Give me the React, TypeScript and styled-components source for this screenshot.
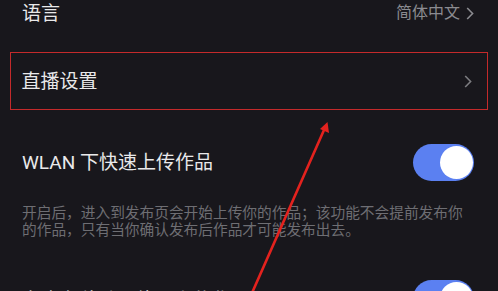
import React from "react";
import styled, { createGlobalStyle } from "styled-components";

const GlobalStyle = createGlobalStyle`
  html, body {
    margin: 0;
    padding: 0;
    background: #18171c;
    overflow: hidden;
  }
  body {
    font-family: Roboto, "Noto Sans CJK SC", sans-serif;
  }
`;

const Page = styled.div`
  position: relative;
  width: 498px;
  height: 291px;
  overflow: hidden;
  background: #18171c;
  display: flex;
  flex-direction: column;
`;

const Row = styled.div<{ $height: number; $top?: number }>`
  display: flex;
  align-items: center;
  justify-content: space-between;
  flex-shrink: 0;
  height: ${({ $height }) => $height}px;
  margin-top: ${({ $top }) => $top || 0}px;
  padding: 0 24px 0 22px;
`;

const Highlight = styled.div`
  display: flex;
  align-items: center;
  justify-content: space-between;
  flex-shrink: 0;
  height: 56px;
  margin: 26px 10px 0;
  padding: 0 15px 0 10.5px;
  border: 1.5px solid #c42a2b;
`;

const Label = styled.span<{ $drop?: number }>`
  font-size: 19px;
  color: #e9e9ea;
  line-height: 1;
  white-space: nowrap;
  padding-top: ${({ $drop }) => $drop || 0}px;
`;

const Value = styled.span`
  display: flex;
  align-items: center;
  gap: 6px;
  font-size: 16px;
  color: #8b8b90;
  line-height: 1;
`;

const Note = styled.p`
  margin: 24px 0 0;
  padding: 0 10px 0 22px;
  font-size: 14.7px;
  line-height: 17px;
  color: #6e6e73;
  white-space: nowrap;
  flex-shrink: 0;
`;

const Track = styled.div<{ $on?: boolean }>`
  width: 61px;
  height: 37px;
  border-radius: 19px;
  background: ${({ $on }) => ($on ? "#5b80f1" : "#3a3a40")};
  display: flex;
  align-items: center;
  justify-content: ${({ $on }) => ($on ? "flex-end" : "flex-start")};
  padding: 0 1px;
  box-sizing: border-box;
  flex-shrink: 0;
`;

const Knob = styled.div`
  width: 33px;
  height: 33px;
  border-radius: 50%;
  background: #ffffff;
`;

const Overlay = styled.svg`
  position: absolute;
  left: 0;
  top: 0;
  pointer-events: none;
`;

const Chevron = ({ color = "#8b8b90" }: { color?: string }) => (
  <svg width="8" height="13" viewBox="0 0 8 13">
    <path d="M1.2 1 L6.6 6.5 L1.2 12" fill="none" stroke={color} strokeWidth="1.6" />
  </svg>
);

const Toggle = ({ on }: { on?: boolean }) => (
  <Track $on={on}>
    <Knob />
  </Track>
);

export default function App() {
  return (
    <Page>
      <GlobalStyle />
      <Row $height={26}>
        <Label>语言</Label>
        <Value>
          简体中文
          <Chevron />
        </Value>
      </Row>
      <Highlight>
        <Label>直播设置</Label>
        <Chevron color="#7c7c80" />
      </Highlight>
      <Row $height={37} $top={34}>
        <Label>WLAN 下快速上传作品</Label>
        <Toggle on />
      </Row>
      <Note>
        开启后，进入到发布页会开始上传你的作品；该功能不会提前发布你
        <br />
        的作品，只有当你确认发布后作品才可能发布出去。
      </Note>
      <Row $height={37} $top={41}>
        <Label $drop={4}>允许在移动网络下上传作品</Label>
        <Toggle on />
      </Row>
      <Overlay width="498" height="291" viewBox="0 0 498 291">
        <line x1="252" y1="293" x2="324" y2="130" stroke="#e3221e" strokeWidth="2.6" strokeLinecap="round" />
        <polygon points="327.5,122 329,133 320,129" fill="#e3221e" />
      </Overlay>
    </Page>
  );
}
